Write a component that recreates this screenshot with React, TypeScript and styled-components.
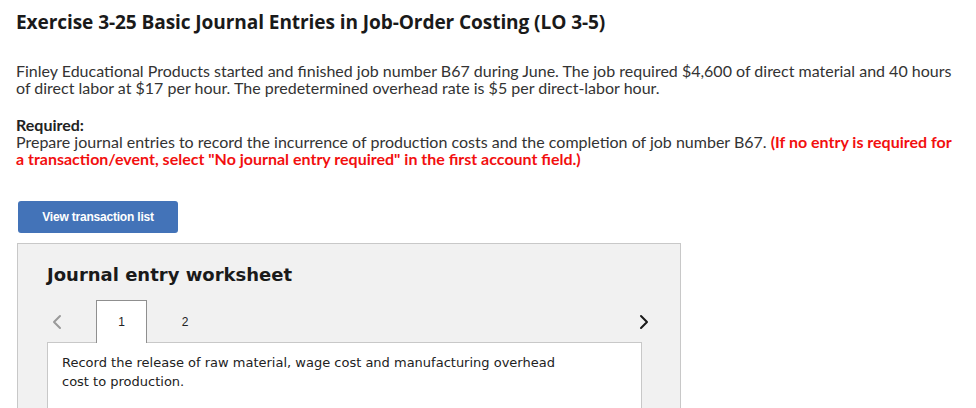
import React from "react";
import styled, { createGlobalStyle } from "styled-components";

const GlobalStyle = createGlobalStyle`
  body {
    margin: 0;
    background: #ffffff;
    font-family: "Lato", "Open Sans", sans-serif;
    color: #333333;
  }
`;

const Page = styled.div`
  padding: 10px 16px 0 16px;
  width: 976px;
  box-sizing: border-box;
`;

const Title = styled.h1`
  margin: 0;
  font-family: "Open Sans", sans-serif;
  font-weight: 700;
  font-size: 19.1px;
  line-height: 24px;
  letter-spacing: -0.1px;
  color: #1a1a1a;
`;

const Paragraph = styled.p`
  margin: 28px 0 0 0;
  font-size: 16px;
  line-height: 17px;
  color: #333333;
`;

const RequiredBlock = styled.div`
  margin-top: 20px;
  font-size: 16px;
  line-height: 17px;
`;

const RequiredLabel = styled.div`
  font-weight: 700;
  color: #222222;
`;

const Warning = styled.strong`
  color: #f20f0f;
  font-weight: 700;
`;

const ViewButton = styled.button`
  margin: 34px 0 0 2px;
  width: 160px;
  height: 32px;
  border: none;
  border-radius: 3px;
  background: #4373b8;
  color: #ffffff;
  font-family: "Liberation Sans", Arial, sans-serif;
  font-weight: 700;
  font-size: 12px;
  letter-spacing: -0.2px;
  cursor: pointer;
`;

const Worksheet = styled.section`
  margin: 10px 0 0 1px;
  width: 664px;
  height: 200px;
  box-sizing: border-box;
  background: #f1f1f1;
  border: 1px solid #c8c8c8;
  padding: 18px 38px 0 29px;
`;

const WorksheetTitle = styled.h2`
  margin: 0;
  font-family: "DejaVu Sans", Verdana, sans-serif;
  font-weight: 700;
  font-size: 18px;
  line-height: 26px;
  color: #1a1a1a;
`;

const TabRow = styled.div`
  display: flex;
  align-items: flex-end;
  margin: 13px -12px 0 0;
  height: 41px;
`;

const Chevron = styled.button<{ $active?: boolean }>`
  display: flex;
  align-items: center;
  justify-content: center;
  width: 20px;
  height: 30px;
  align-self: center;
  padding: 0;
  border: none;
  background: transparent;
  color: ${({ $active }) => ($active ? "#1a1a1a" : "#9a9a9a")};
  cursor: pointer;
`;

const Tabs = styled.div`
  display: flex;
  flex: 1;
  margin-left: 29px;
  align-items: flex-end;
`;

const Tab = styled.div<{ $selected?: boolean }>`
  width: ${({ $selected }) => ($selected ? "49px" : "74px")};
  height: 41px;
  box-sizing: content-box;
  display: flex;
  align-items: center;
  justify-content: center;
  padding-bottom: ${({ $selected }) => ($selected ? "1px" : "0")};
  margin-bottom: ${({ $selected }) => ($selected ? "-1px" : "0")};
  background: ${({ $selected }) => ($selected ? "#ffffff" : "transparent")};
  border: ${({ $selected }) => ($selected ? "1px solid #8f8f8f" : "1px solid transparent")};
  border-bottom: none;
  font-family: "Liberation Sans", Arial, sans-serif;
  font-size: 12px;
  color: #222222;
  position: relative;
  z-index: 1;
`;

const EntryBox = styled.div`
  background: #ffffff;
  border: 1px solid #c8c8c8;
  height: 120px;
  padding: 10px 14px 0 14px;
  font-family: "DejaVu Sans", Verdana, sans-serif;
  font-size: 13px;
  line-height: 19px;
  color: #222222;
`;

const EntryText = styled.p`
  margin: 0;
  width: 510px;
`;

const ChevronIcon = ({ dir }: { dir: "left" | "right" }) => (
  <svg width="10" height="16" viewBox="0 0 10 16" fill="none">
    <path
      d={dir === "left" ? "M8 2 L2 8 L8 14" : "M2 2 L8 8 L2 14"}
      stroke="currentColor"
      strokeWidth="2"
      strokeLinecap="round"
      strokeLinejoin="round"
    />
  </svg>
);

export default function App() {
  return (
    <>
      <GlobalStyle />
      <Page>
        <Title>Exercise 3-25 Basic Journal Entries in Job-Order Costing (LO 3-5)</Title>
        <Paragraph>
          Finley Educational Products started and finished job number B67 during June. The job required
          $4,600 of direct material and 40 hours of direct labor at $17 per hour. The predetermined
          overhead rate is $5 per direct-labor hour.
        </Paragraph>
        <RequiredBlock>
          <RequiredLabel>Required:</RequiredLabel>
          Prepare journal entries to record the incurrence of production costs and the completion of job
          number B67.{" "}
          <Warning>
            (If no entry is required for a transaction/event, select "No journal entry required" in the
            first account field.)
          </Warning>
        </RequiredBlock>
        <ViewButton>View transaction list</ViewButton>
        <Worksheet>
          <WorksheetTitle>Journal entry worksheet</WorksheetTitle>
          <TabRow>
            <Chevron>
              <ChevronIcon dir="left" />
            </Chevron>
            <Tabs>
              <Tab $selected>1</Tab>
              <Tab>2</Tab>
            </Tabs>
            <Chevron $active>
              <ChevronIcon dir="right" />
            </Chevron>
          </TabRow>
          <EntryBox>
            <EntryText>
              Record the release of raw material, wage cost and manufacturing overhead cost to
              production.
            </EntryText>
          </EntryBox>
        </Worksheet>
      </Page>
    </>
  );
}
